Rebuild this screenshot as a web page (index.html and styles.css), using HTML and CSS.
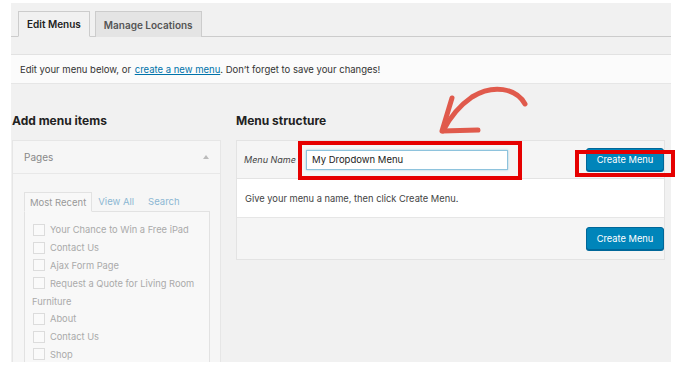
FILE: index.html
```html
<!DOCTYPE html>
<html>
<head>
<meta charset="utf-8">
<link rel="stylesheet" href="styles.css">
</head>
<body>
<div class="wrap">
  <div class="tabs">
    <div class="tab active">Edit Menus</div>
    <div class="tab">Manage Locations</div>
  </div>
  <div class="notice"><span>Edit your menu below, or <a href="#">create a new menu</a>. Don’t forget to save your changes!</span></div>
  <div class="cols">
    <div class="left">
      <h2>Add menu items</h2>
      <div class="pages">
        <div class="pages-head"><span>Pages</span><span class="tri"></span></div>
        <div class="pages-body">
          <div class="itabs">
            <div class="itab active">Most Recent</div>
            <div class="itab link">View All</div>
            <div class="itab link">Search</div>
          </div>
          <div class="ipanel">
            <div class="item"><span class="cb"></span>Your Chance to Win a Free iPad</div>
            <div class="item"><span class="cb"></span>Contact Us</div>
            <div class="item"><span class="cb"></span>Ajax Form Page</div>
            <div class="item"><span class="cb"></span>Request a Quote for Living Room</div>
            <div class="item wrapline">Furniture</div>
            <div class="item"><span class="cb"></span>About</div>
            <div class="item"><span class="cb"></span>Contact Us</div>
            <div class="item"><span class="cb"></span>Shop</div>
          </div>
        </div>
      </div>
    </div>
    <div class="right">
      <h2>Menu structure</h2>
      <div class="mbox">
        <div class="mhead">
          <span class="mlabel">Menu Name</span>
          <span class="input">My Dropdown Menu</span>
          <span class="btn">Create Menu</span>
        </div>
        <div class="mbody">Give your menu a name, then click Create Menu.</div>
        <div class="mfoot"><span class="btn">Create Menu</span></div>
      </div>
    </div>
  </div>
  <div class="hl hl1"></div>
  <div class="hl hl2"></div>
  <svg class="arrow" width="700" height="381" viewBox="0 0 700 381">
    <path d="M525 104 C 516 88, 493 84, 472 97 C 459 106, 449 119, 443 131" fill="none" stroke="#e05a4c" stroke-width="5" stroke-linecap="round"/>
    <path d="M452 98 L 442 131 L 478 130" fill="none" stroke="#e05a4c" stroke-width="5" stroke-linecap="round" stroke-linejoin="round"/>
  </svg>
</div>
</body>
</html>
```
FILE: styles.css
```css
* { box-sizing: border-box; }
body { margin: 0; background: #fff; font-family: Inter, "Open Sans", "Liberation Sans", sans-serif; color: #444; }
.wrap { position: relative; margin: 3px 0 0 11px; width: 660px; height: 359px; background: #f1f1f1; }
.tabs { height: 34px; border-bottom: 1px solid #ccc; display: flex; align-items: flex-end; padding-left: 7px; gap: 5px; }
.tab { height: 26px; padding: 0 8px; display: flex; align-items: center; font-size: 10px; font-weight: 600; color: #555; background: #e4e4e4; border: 1px solid #ccc; border-bottom: none; margin-bottom: -1px; }
.tab.active { background: #f1f1f1; color: #222; border-bottom: 1px solid #f1f1f1; }
.notice { margin-top: 17px; height: 30px; border-top: 1px solid #e2e2e2; border-bottom: 1px solid #e6e6e6; background: #fbfbfb; font-size: 9.5px; color: #333; display: flex; align-items: center; padding-left: 9px; }
.notice a { color: #0073aa; text-decoration: underline; margin-left: 1px; }
.cols { display: flex; padding-left: 1px; margin-top: 30px; gap: 15px; }
h2 { margin: 0 0 12px; font-size: 12px; font-weight: 700; color: #222; line-height: 14px; }
.left { width: 209px; }
.right { width: 429px; }
.pages { border: 1px solid #e6e6e6; border-bottom: none; background: #f6f6f6; height: 222px; overflow: hidden; }
.pages-head { height: 33px; border-bottom: 1px solid #e8e8e8; display: flex; align-items: center; justify-content: space-between; padding: 0 11px; font-size: 10px; color: #888; }
.tri { width: 0; height: 0; border-left: 3px solid transparent; border-right: 3px solid transparent; border-bottom: 4px solid #bbb; }
.pages-body { padding: 17px 10px 0 11px; }
.itabs { display: flex; align-items: flex-end; height: 20px; }
.itab { font-size: 9.5px; padding: 0 5px; height: 20px; display: flex; align-items: center; color: #999; }
.itab.active { border: 1px solid #e2e2e2; border-bottom: 1px solid #f8f8f8; background: #f8f8f8; margin-bottom: -1px; }
.itab.link { color: #8cb6d3; padding: 0 8px 0 6px; }
.ipanel { border: 1px solid #e2e2e2; background: #f8f8f8; padding: 9px 8px 0; height: 200px; }
.item { display: flex; align-items: center; height: 17.8px; font-size: 9.3px; color: #aaa; }
.item.wrapline { margin-left: -1px; }
.cb { width: 12px; height: 12px; border: 1px solid #dcdcdc; background: #fafafa; margin-right: 5px; flex: none; }
.mbox { border: 1px solid #e3e3e3; }
.mhead { height: 38px; background: #f5f5f5; border-bottom: 1px solid #e3e3e3; display: flex; align-items: center; padding: 0 0 0 7px; }
.mlabel { font-style: italic; font-size: 9px; color: #444; width: 62px; }
.input { width: 202px; height: 20px; border: 1px solid #8ec3dd; background: #fff; font-size: 9.5px; color: #222; display: flex; align-items: center; padding-left: 5px; box-shadow: 0 0 2px rgba(30,140,190,.4); }
.btn { margin-left: auto; height: 23px; width: 78px; background: #0085ba; border: 1px solid #006799; border-radius: 3px; color: #fff; font-size: 9.3px; display: flex; align-items: center; justify-content: center; box-shadow: 0 1px 0 #006799; }
.mbody { height: 39px; background: #fff; font-size: 9.3px; color: #444; display: flex; align-items: center; padding-left: 8px; border-bottom: 1px solid #e6e6e6; }
.mfoot { height: 41px; background: #f5f5f5; display: flex; align-items: center; }
.hl { position: absolute; border: 4px solid #e60000; }
.hl1 { left: 287px; top: 138px; width: 224px; height: 39px; }
.hl2 { left: 564px; top: 147px; width: 100px; height: 27px; }
.arrow { position: absolute; left: -11px; top: -3px; pointer-events: none; }
```
